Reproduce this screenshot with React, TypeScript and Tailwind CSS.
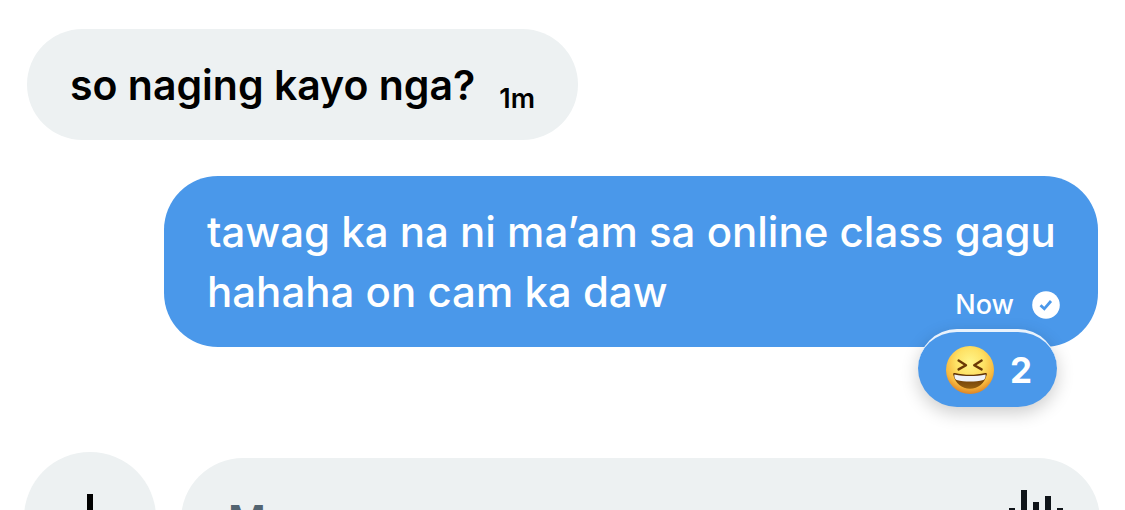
function LaughingFace() {
  return (
    <svg viewBox="0 0 48 48" className="size-12 shrink-0" role="img" aria-label="Laughing">
      <defs>
        <radialGradient id="face" cx="50%" cy="34%" r="66%">
          <stop offset="0" stopColor="#fff58a" />
          <stop offset="0.45" stopColor="#fee164" />
          <stop offset="0.78" stopColor="#f8b93e" />
          <stop offset="1" stopColor="#dd8426" />
        </radialGradient>
        <linearGradient id="mouth" x1="0" y1="0" x2="0" y2="1">
          <stop offset="0" stopColor="#5a2d05" />
          <stop offset="1" stopColor="#96600f" />
        </linearGradient>
      </defs>
      <circle cx="24" cy="24" r="24" fill="url(#face)" />
      <path
        d="M12.600 14.600 20 19.200 12.600 23.400M35.600 14.600 28.200 19.200 35.600 23.400"
        fill="none"
        stroke="#6b3a06"
        strokeWidth="2.400"
        strokeLinecap="round"
        strokeLinejoin="round"
      />
      <path
        d="M7.200 28.600c-.3-1.300.5-1.900 1.600-1.600 10 2.400 20.400 2.400 30.400 0 1.100-.3 1.900.3 1.600 1.600-2.200 9-8.600 14.200-16.800 14.200S9.400 37.600 7.200 28.600Z"
        fill="url(#mouth)"
      />
      <path
        d="M8.400 28.400c10.200 2.200 21 2.200 31.200 0 .3 2.400-.6 4.800-2.200 5.600-8.400 2-18.400 2-26.800 0-1.600-.8-2.500-3.200-2.200-5.600Z"
        fill="#f1f3f8"
      />
    </svg>
  );
}

function SeenMark() {
  return (
    <svg viewBox="0 0 28 28" className="size-7 shrink-0" role="img" aria-label="Seen">
      <circle cx="14" cy="14" r="13.800" fill="#fff" />
      <path d="m8.500 14.200 3.800 3.600 6.700-7.800" fill="none" stroke="#4a98ea" strokeWidth="2.800" />
    </svg>
  );
}

function VoiceBars() {
  return (
    <svg viewBox="0 0 54 60" className="h-15 w-[54px]" fill="#0f1419" aria-hidden="true">
      <rect x="0" y="18" width="6" height="24" />
      <rect x="12" y="0" width="6" height="60" />
      <rect x="24" y="12" width="6" height="36" />
      <rect x="36" y="6" width="6" height="48" />
      <rect x="48" y="18" width="6" height="24" />
    </svg>
  );
}

export default function App() {
  return (
    <main className="flex h-screen flex-col overflow-hidden bg-white font-['Inter','Liberation_Sans',sans-serif]">
      <section className="flex flex-col px-[27px] pt-[29px]" aria-label="Conversation">
        <article className="flex items-end gap-6 self-start rounded-[56px] bg-[#edf1f2] px-[43px] pt-[27px] pb-[25px] text-black">
          <p className="text-[41px] leading-[59px] font-semibold">so naging kayo nga?</p>
          <time className="text-[27px] leading-8 font-semibold">1m</time>
        </article>

        <div className="mt-9 flex max-w-[934px] flex-col self-end">
          <article className="rounded-[54px] bg-[#4a98ea] pt-[26px] pr-[38px] pb-[25px] pl-[43px] text-white">
            <div className="text-[42px] leading-[60px] font-medium">
              tawag ka na ni ma’am sa online class gagu hahaha on cam ka daw
              <div className="float-right mt-[27px] flex items-center gap-[18px]">
                <time className="text-[27px] leading-8 font-medium">Now</time>
                <SeenMark />
              </div>
            </div>
          </article>
          <button
            type="button"
            className="-mt-[18px] mr-[41px] flex items-center gap-4 self-end rounded-[46px] border-t-3 border-[#e9f2fc] bg-[#4a98ea] pt-[14px] pb-[13px] pr-[25px] pl-7 text-white shadow-[0_6px_18px_rgba(0,0,0,0.2)]"
          >
            <LaughingFace />
            <span className="text-[35px] leading-12 font-bold">2</span>
          </button>
        </div>
      </section>

      <form className="mt-[45px] flex shrink-0 items-start gap-[25px] pr-[25px] pl-6">
        <button
          type="button"
          aria-label="Add attachment"
          className="flex size-33 shrink-0 items-center justify-center rounded-full bg-[#edf1f2]"
        >
          <svg viewBox="0 0 48 48" className="size-12" stroke="#000" strokeWidth="6" aria-hidden="true">
            <path d="M24 0v48M0 24h48" />
          </svg>
        </button>
        <div className="mt-1.5 flex h-31 grow items-center rounded-[62px] bg-[#edf1f2] pr-[37px] pl-[47px]">
          <input
            type="text"
            aria-label="Message"
            placeholder="Message"
            className="min-w-0 grow bg-transparent text-[41px] leading-[60px] font-semibold outline-none placeholder:text-[#536471]"
          />
          <button type="button" aria-label="Record a voice message">
            <VoiceBars />
          </button>
        </div>
      </form>
    </main>
  );
}
